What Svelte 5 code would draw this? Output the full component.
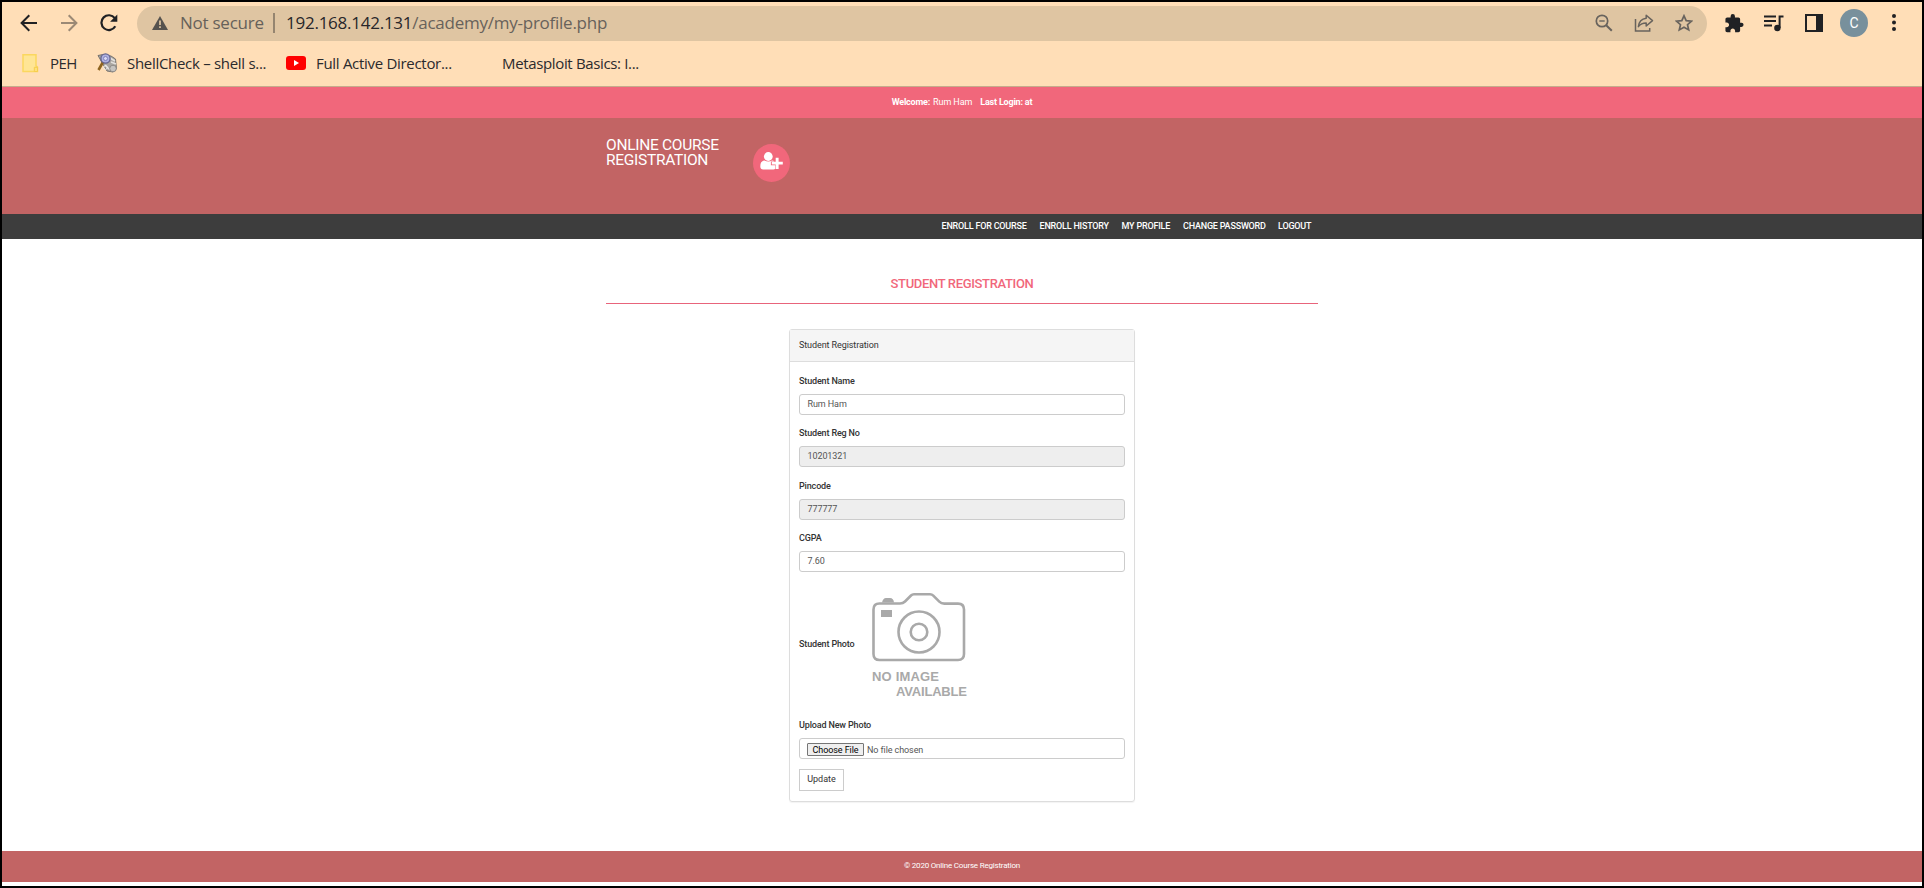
<script>
  const bookmarks = [
    { icon: 'folder', label: 'PEH', cls: 'peh' },
    { icon: 'shell', label: 'ShellCheck – shell s...', cls: 'shellcheck' },
    { icon: 'youtube', label: 'Full Active Director...', cls: 'youtube' },
    { icon: 'none', label: 'Metasploit Basics: I...', cls: 'metasploit' }
  ];
  const menu = [
    { label: 'ENROLL FOR COURSE', w: 86 },
    { label: 'ENROLL HISTORY', w: 70 },
    { label: 'MY PROFILE', w: 49.5 },
    { label: 'CHANGE PASSWORD', w: 83 },
    { label: 'LOGOUT', w: 34 }
  ];
  const fields = [
    { label: 'Student Name', value: 'Rum Ham', locked: false },
    { label: 'Student Reg No', value: '10201321', locked: true },
    { label: 'Pincode', value: '777777', locked: true },
    { label: 'CGPA', value: '7.60', locked: false }
  ];
</script>

<div class="window">
  <header class="chrome">
    <div class="toolbar">
      <svg class="back" width="18" height="18" viewBox="0 0 18 18" fill="none" stroke="#202124" stroke-width="2"><path d="M17 9H2M9.3 1.3L1.6 9l7.7 7.7" /></svg>
      <svg class="forward" width="18" height="18" viewBox="0 0 18 18" fill="none" stroke="#9b8975" stroke-width="2"><path d="M1 9h15M8.7 1.3L16.400 9l-7.700 7.700" /></svg>
      <svg class="reload" width="18" height="18" viewBox="0 0 18 18"><path d="M15.300 12.300A7.400 7.400 0 1 1 14.800 4.200" fill="none" stroke="#202124" stroke-width="2.200" /><path d="M17.300 .6v7.200h-7.200z" fill="#202124" /></svg>
      <div class="address">
        <svg class="warn" width="16" height="14" viewBox="0 0 16 14"><path d="M8 0l8 14H0z" fill="#55524e" /><path d="M8 4.500v4.500M8 10.300v1.800" stroke="#dfc5a2" stroke-width="1.700" /></svg>
        <span class="insecure">Not secure</span>
        <i class="divider"></i>
        <span class="url">192.168.142.131<span>/academy/my-profile.php</span></span>
        <div class="tools">
          <svg width="18" height="18" viewBox="0 0 18 18" fill="none" stroke="#68635d" stroke-width="1.700"><circle cx="7" cy="7" r="5.700" /><path d="M11.200 11.200l5.600 5.600" stroke-width="2" /><path d="M4.300 7h5.400" stroke-width="1.400" /></svg>
          <svg width="20" height="18" viewBox="0 0 20 18" fill="none" stroke="#68635d" stroke-width="1.500"><path d="M1.500 5v12h14.200v-3" /><path d="M12.200 1.200l6.300 5.400-6.300 5.400V9c-3.500 0-5.800 1-7.800 3.600.5-4.500 3-7.800 7.800-8.400z" stroke-linejoin="round" /></svg>
          <svg width="18" height="18" viewBox="0 0 18 18" fill="none" stroke="#68635d" stroke-width="1.700"><path d="M9 1.800l2.200 4.900 5.200.5-3.900 3.500 1.200 5.200L9 13.200l-4.700 2.700 1.200-5.200-3.900-3.500 5.200-.5z" /></svg>
        </div>
      </div>
      <svg class="puzzle" width="19" height="19" viewBox="2 1 21 22"><path d="M20.500 11H19V7c0-1.100-.9-2-2-2h-4V3.500a2.500 2.500 0 0 0-5 0V5H4c-1.100 0-1.990.9-1.990 2v3.800H3.500c1.490 0 2.700 1.210 2.700 2.700s-1.210 2.700-2.700 2.700H2V20c0 1.100.9 2 2 2h3.800v-1.500c0-1.490 1.210-2.700 2.700-2.700s2.700 1.210 2.700 2.700V22H17c1.100 0 2-.9 2-2v-4h1.500a2.500 2.500 0 0 0 0-5z" fill="#202124" /></svg>
      <svg class="queue" width="20" height="17" viewBox="0 0 20 17"><path d="M0 1.500h12M0 6h12M0 10.500h8" stroke="#202124" stroke-width="1.800" /><circle cx="13.400" cy="13" r="3.200" fill="#202124" /><path d="M15.600 13V1.500H19.500" fill="none" stroke="#202124" stroke-width="2" /></svg>
      <svg class="panelicon" width="18" height="18" viewBox="0 0 18 18"><path d="M0 0h18v18H0zM2 2v14h9V2z" fill="#202124" fill-rule="evenodd" /></svg>
      <span class="avatar">C</span>
      <svg class="dots" width="4" height="18" viewBox="0 0 4 18" fill="#202124"><circle cx="2" cy="2" r="2" /><circle cx="2" cy="8.500" r="2" /><circle cx="2" cy="15" r="2" /></svg>
    </div>
    <nav class="bookmarks">
      {#each bookmarks as b}
        <div class="bookmark {b.cls}">
          {#if b.icon === 'folder'}
            <svg width="17" height="19" viewBox="0 0 17 19"><path d="M1 .8h13v11l1.500 1.400v4.300H1z" fill="#ffe595" stroke="#fbd75f" stroke-width="1.500" /><path d="M12.300 13.300h3.200v4.200h-3.200z" fill="#ffe07c" stroke="#f6ce4c" /></svg>
          {:else if b.icon === 'shell'}
            <svg width="21" height="20" viewBox="0 0 21 20"><path d="M1 2.500l4-.8 9 1.300 4.500 3 1 10-3.500 3-6-1-3-5z" fill="#aaa6a1" stroke="#77736f" /><path d="M13 5l5 3M14 9l5 2M8 12l5 5" stroke="#e1dfdc" stroke-width="1.500" /><circle cx="16" cy="15.500" r="3.300" fill="#c5c3c0" stroke="#8e8b88" /><circle cx="8.500" cy="14.500" r="1.800" fill="none" stroke="#eee" /><path d="M6 9l-4.500 8" stroke="#8e6420" stroke-width="2.600" /><circle cx="8.500" cy="5.500" r="4.600" fill="#aeb0e0" stroke="#64648f" stroke-width="1.300" /><circle cx="8.500" cy="5.500" r="2" fill="#dadaf5" stroke="#8183bb" /></svg>
          {:else if b.icon === 'youtube'}
            <svg width="20" height="14" viewBox="0 0 20 14"><rect width="20" height="14" rx="3" fill="#f00" /><path d="M8 4l5 3-5 3z" fill="#fff" /></svg>
          {/if}
          <span>{b.label}</span>
        </div>
      {/each}
    </nav>
  </header>

  <div class="welcome">
    <b class="hello">Welcome:</b><span class="user">Rum Ham</span><b class="login">Last Login: at</b>
  </div>
  <div class="banner">
    <div class="container brandrow">
      <div class="brand">ONLINE COURSE<br />REGISTRATION</div>
      <div class="badge">
        <svg width="24" height="18" viewBox="0 0 24 18" fill="#fff"><circle cx="8.300" cy="4.500" r="4.400" /><path d="M4.500 8.400q3.800 2.300 7.600 0 1.400.2 2.300 1h-3.500v3.900h4.400v3.500q-.6.700-2 .7H3.200Q.3 17.500.3 14.300.3 9 4.500 8.400z" /><path d="M15.700 5.800h2.900v3.900h4.200v2.800h-4.200v4.400h-2.900v-4.400h-3.900V9.700h3.900z" /></svg>
      </div>
    </div>
  </div>
  <nav class="menu">
    <div class="container menurow">
      {#each menu as m}<a href="#top" style="width:{m.w}px">{m.label}</a>{/each}
    </div>
  </nav>

  <main class="container">
    <h1>STUDENT REGISTRATION</h1>
    <section class="card">
      <h2>Student Registration</h2>
      <div class="body">
        {#each fields as f}
          <div class="field">
            <div class="label">{f.label}</div>
            <div class="input" class:locked={f.locked}>{f.value}</div>
          </div>
        {/each}
        <div class="photo">
          <div class="label">Student Photo</div>
          <svg width="98" height="108" viewBox="0 0 98 108">
            <g fill="none" stroke="#a9a9a9" stroke-width="2.600">
              <path d="M7.500 10.500h20.500q3 0 5-2l6-6q1.200-1.200 3-1.200h16q2 0 3.300 1.300l6 6q2 2 5 2H86q6 0 6 6V61q0 6-6 6H7.500q-6 0-6-6V16.500q0-6 6-6z" />
              <circle cx="47" cy="39" r="20.500" /><circle cx="47" cy="39" r="8.300" />
            </g>
            <path d="M10 9.500q1-4.500 4-4.500h4q3.500 0 4 4.500zM9 17h11v7H9z" fill="#a9a9a9" />
            <g class="noimage"><text x="0" y="87.500" textLength="67">NO IMAGE</text><text x="24" y="103" textLength="71">AVAILABLE</text></g>
          </svg>
        </div>
        <div class="label">Upload New Photo</div>
        <div class="input file"><span class="choose">Choose File</span><span class="nofile">No file chosen</span></div>
        <button>Update</button>
      </div>
    </section>
  </main>
  <footer>© 2020 Online Course Registration</footer>
</div>

<style>
  :global(body) { margin: 0; background: #fff; }
  .window, .window * { box-sizing: border-box; }
  .window { width: 1924px; height: 888px; border: 2px solid #000; background: #fff; display: flex; flex-direction: column; font: 9px/12px Roboto, sans-serif; letter-spacing: -.09px; color: #333; overflow: hidden; white-space: nowrap; }
  svg { display: block; flex: none; }
  .chrome { height: 85px; flex: none; background: #ffdeb7; border-bottom: 1px solid #c5ac8c; font-family: "Open Sans", sans-serif; color: #2b2a2d; }
  .toolbar { height: 42px; display: flex; align-items: center; padding-left: 18px; }
  .forward { margin-left: 22px; }
  .reload { margin-left: 22px; }
  .address { width: 1570px; height: 35px; border-radius: 18px; background: #dfc5a2; margin-left: 19px; display: flex; align-items: center; padding-left: 15px; font-size: 17px; line-height: 24px; }
  .insecure { margin-left: 12px; width: 84px; color: #66615a; letter-spacing: -.25px; }
  .divider { width: 2px; height: 20px; background: #958570; margin-left: 9px; }
  .url { margin-left: 11px; letter-spacing: -.25px; color: #28272a; }
  .url span { color: #68625b; }
  .tools { margin-left: auto; display: flex; align-items: center; gap: 21px; padding-right: 14px; }
  .puzzle { margin-left: 18px; }
  .queue { margin-left: 20px; }
  .panelicon { margin-left: 21px; }
  .avatar { width: 28px; height: 28px; border-radius: 50%; background: #78909c; color: #fff; font: 14px/28px Roboto, sans-serif; text-align: center; margin-left: 17px; }
  .dots { margin-left: 24px; }
  .bookmarks { display: flex; height: 38px; padding-left: 20px; font-size: 15px; line-height: 22px; }
  .bookmark { display: flex; align-items: center; }
  .peh { width: 75px; gap: 11px; letter-spacing: -.5px; }
  .shellcheck { width: 189px; gap: 9px; letter-spacing: -.3px; }
  .youtube { width: 216px; gap: 10px; letter-spacing: -.3px; }
  .metasploit { letter-spacing: -.35px; }
  .welcome { height: 31px; flex: none; background: #f1677b; color: #fff; display: flex; justify-content: center; align-items: center; padding-bottom: 1px; }
  .hello, .login { font-weight: 700; letter-spacing: -.2px; }
  .user { margin: 0 8px 0 3px; }
  .container { width: 712px; margin: 0 auto; }
  .banner { height: 96px; flex: none; background: #c26464; }
  .brandrow { display: flex; align-items: flex-start; }
  .brand { width: 147px; padding-top: 20px; font-size: 15.500px; line-height: 15px; letter-spacing: -.28px; color: #fff; }
  .badge { width: 37px; height: 38px; margin-top: 26px; border-radius: 50%; background: #f1677b; padding: 8px 0 0 7px; }
  .menu { height: 25px; flex: none; background: #3d3d3d; }
  .menurow { display: flex; justify-content: flex-end; gap: 12px; padding-right: 6px; }
  .menurow a { color: #fff; text-decoration: none; font-size: 9px; line-height: 24px; font-weight: 500; letter-spacing: -.2px; }
  main { flex: 1; }
  h1 { margin: 0 0 25px; height: 65px; border-bottom: 1px solid #e8647b; padding-top: 36px; text-align: center; color: #f1677b; font-size: 13px; line-height: 18px; font-weight: 500; letter-spacing: -.34px; }
  .card { width: 346px; height: 473px; margin: 0 auto; border: 1px solid #ddd; border-radius: 3px; box-shadow: 0 1px 1px rgba(0,0,0,.05); }
  h2 { margin: 0; height: 32px; font-size: 9px; line-height: 30px; font-weight: 400; padding-left: 9px; background: #f5f5f5; border-bottom: 1px solid #ddd; }
  .body { padding: 13px 9px 0; }
  .label { font-weight: 500; line-height: 12px; letter-spacing: -.15px; }
  .field { height: 52.330px; }
  .input { height: 21px; border: 1px solid #ccc; border-radius: 3px; margin-top: 7px; padding-left: 7.500px; line-height: 18px; color: #555; }
  .locked { background: #eee; }
  .photo { height: 135px; display: flex; align-items: flex-start; gap: 17px; padding-top: 9px; }
  .photo .label { margin-top: 45px; width: 56px; }
  .noimage { font: bold 13px "Liberation Sans", sans-serif; fill: #a9a9a9; letter-spacing: 0; }
  .file { display: flex; align-items: center; padding-top: 1px; }
  .choose { border: 1px solid #767676; border-radius: 1px; background: #efefef; color: #000; width: 57px; height: 13px; line-height: 12px; text-align: center; margin-left: -.5px; }
  .nofile { margin-left: 3px; line-height: 14px; padding-top: 1px; }
  button { margin: 10px 0 0; display: block; width: 45px; height: 22px; border: 1px solid #ccc; background: #fff; color: #333; padding: 0 0 2px; font: 9px/18px Roboto, sans-serif; }
  footer { height: 31px; flex: none; margin-bottom: 4px; background: #c26464; color: #fff; font-size: 8px; line-height: 29px; text-align: center; letter-spacing: -.2px; }
</style>
